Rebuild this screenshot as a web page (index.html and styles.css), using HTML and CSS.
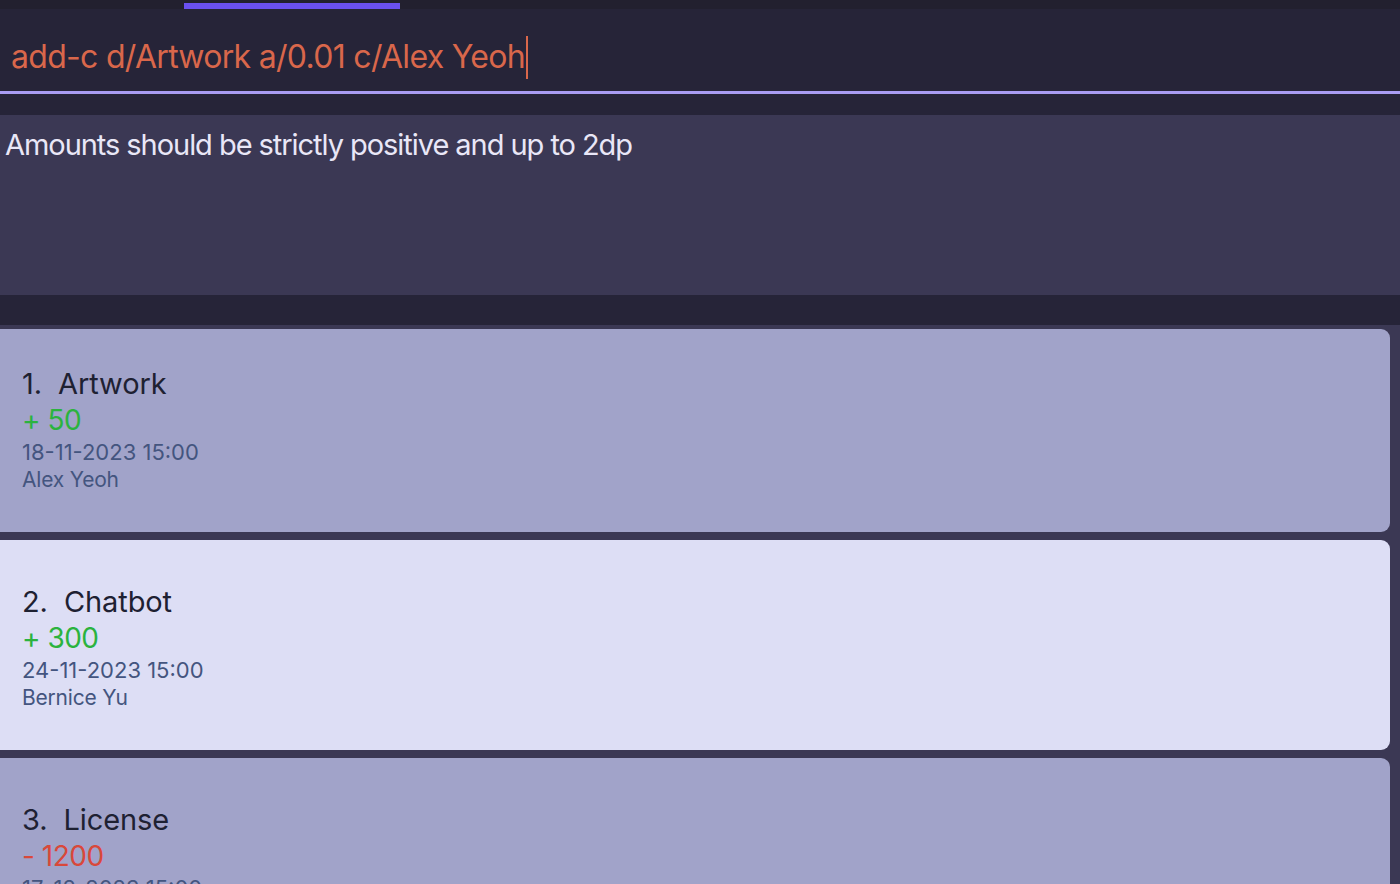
FILE: index.html
```html
<!DOCTYPE html>
<html>
<head>
<meta charset="utf-8">
<link rel="stylesheet" href="styles.css">
</head>
<body>
<div class="app">
  <div class="tabs"><div class="tab-indicator"></div></div>
  <div class="command">
    <div class="command-text">add-c d/Artwork a/0.01 c/Alex Yeoh<span class="cursor"></span></div>
  </div>
  <div class="command-line"></div>
  <div class="spacer-a"></div>
  <div class="result">Amounts should be strictly positive and up to 2dp</div>
  <div class="spacer-b"></div>
  <div class="list">
    <div class="card card-dark card-first">
      <div class="title">1.&nbsp;&nbsp;Artwork</div>
      <div class="amount pos">+ 50</div>
      <div class="meta date">18-11-2023 15:00</div>
      <div class="meta">Alex Yeoh</div>
    </div>
    <div class="card card-light">
      <div class="title">2.&nbsp;&nbsp;Chatbot</div>
      <div class="amount pos">+ 300</div>
      <div class="meta date">24-11-2023 15:00</div>
      <div class="meta">Bernice Yu</div>
    </div>
    <div class="card card-dark">
      <div class="title">3.&nbsp;&nbsp;License</div>
      <div class="amount neg">- 1200</div>
      <div class="meta date">17-12-2023 15:00</div>
      <div class="meta">Charlotte Oliveiro</div>
    </div>
  </div>
</div>
</body>
</html>
```
FILE: styles.css
```css
html, body {
  margin: 0;
  padding: 0;
  width: 1400px;
  height: 884px;
  overflow: hidden;
  background: #3b3854;
  font-family: Inter, "Noto Sans", sans-serif;
}
.app {
  display: flex;
  flex-direction: column;
  height: 884px;
}
.tabs {
  height: 9px;
  background: #22202f;
  position: relative;
  flex: none;
}
.tab-indicator {
  position: absolute;
  left: 184px;
  top: 3px;
  width: 216px;
  height: 6px;
  background: #6a50f0;
}
.command {
  height: 82px;
  background: #262438;
  flex: none;
  display: flex;
  align-items: flex-start;
}
.command-text {
  margin: 26px 0 0 11px;
  font-size: 32px;
  line-height: 44px;
  height: 44px;
  color: #d9674b;
  letter-spacing: -0.7px;
  display: flex;
  align-items: center;
}
.cursor {
  display: inline-block;
  width: 2px;
  height: 43px;
  background: #d9674b;
  margin-left: 1px;
}
.command-line {
  height: 3px;
  background: #a99cf2;
  flex: none;
}
.spacer-a {
  height: 21px;
  background: #262438;
  flex: none;
}
.result {
  height: 180px;
  background: #3b3854;
  color: #e9e7f7;
  font-size: 29px;
  line-height: 36px;
  padding: 12px 0 0 5px;
  box-sizing: border-box;
  letter-spacing: -1.05px;
  flex: none;
}
.spacer-b {
  height: 30px;
  background: #262438;
  flex: none;
}
.list {
  flex: 1;
  background: #3b3854;
  padding: 4px 10px 0 0;
  display: flex;
  flex-direction: column;
  gap: 8px;
  overflow: hidden;
}
.card {
  flex: none;
  height: 210px;
  margin-left: -8px;
  border-radius: 9px;
  padding: 44px 0 0 30px;
  box-sizing: border-box;
}
.card-first {
  height: 203px;
  padding-top: 37px;
}
.card-dark { background: #a1a3c9; }
.card-light { background: #dddef5; }
.title {
  font-size: 29px;
  line-height: 36px;
  color: #1e2132;
  letter-spacing: -0.1px;
}
.amount {
  font-size: 28px;
  line-height: 36px;
  letter-spacing: -0.5px;
}
.pos { color: #2bb33e; }
.neg { color: #d9483a; }
.meta {
  font-size: 21px;
  line-height: 28px;
  color: #44557f;
  letter-spacing: -0.2px;
}
.date {
  font-size: 22px;
  letter-spacing: 0;
}
```
